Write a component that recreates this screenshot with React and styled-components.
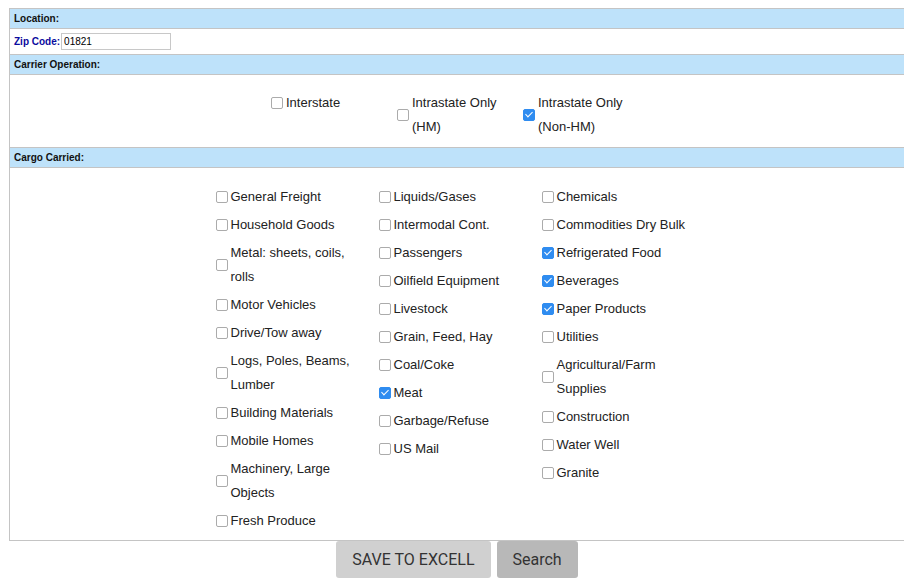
import React from 'react'
import styled, { createGlobalStyle } from 'styled-components'

const carrierOps = [
    { label: 'Interstate', checked: false },
    { label: 'Intrastate Only (HM)', checked: false },
    { label: 'Intrastate Only (Non-HM)', checked: true },
]

const cargoColumns = [
    [
        ['General Freight'], ['Household Goods'], ['Metal: sheets, coils, rolls'],
        ['Motor Vehicles'], ['Drive/Tow away'], ['Logs, Poles, Beams, Lumber'],
        ['Building Materials'], ['Mobile Homes'], ['Machinery, Large Objects'],
        ['Fresh Produce'],
    ],
    [
        ['Liquids/Gases'], ['Intermodal Cont.'], ['Passengers'], ['Oilfield Equipment'],
        ['Livestock'], ['Grain, Feed, Hay'], ['Coal/Coke'], ['Meat', true],
        ['Garbage/Refuse'], ['US Mail'],
    ],
    [
        ['Chemicals'], ['Commodities Dry Bulk'], ['Refrigerated Food', true],
        ['Beverages', true], ['Paper Products', true], ['Utilities'],
        ['Agricultural/Farm Supplies'], ['Construction'], ['Water Well'], ['Granite'],
    ],
]

const CheckItem = ({ label, checked, labelWidth }) => (
    <Item>
        <Check type='checkbox' defaultChecked={checked} />
        <ItemLabel $w={labelWidth}>{label}</ItemLabel>
    </Item>
)

const App = () => {
    return (<>
        <GlobalStyle />
        <Panel>
            <SectionHead>Location:</SectionHead>
            <ZipRow>
                <ZipLabel>Zip Code:</ZipLabel>
                <ZipInput defaultValue='01821' />
            </ZipRow>
            <SectionHead>Carrier Operation:</SectionHead>
            <CarrierBody>
                {carrierOps.map(op => (
                    <CarrierCell key={op.label}>
                        <CheckItem label={op.label} checked={op.checked} labelWidth={100} />
                    </CarrierCell>
                ))}
            </CarrierBody>
            <SectionHead>Cargo Carried:</SectionHead>
            <CargoBody>
                {cargoColumns.map((col, i) => (
                    <CargoColumn key={i}>
                        {col.map(([label, checked]) => (
                            <CheckItem key={label} label={label} checked={checked} labelWidth={135} />
                        ))}
                    </CargoColumn>
                ))}
            </CargoBody>
        </Panel>
        <Buttons>
            <Button>SAVE TO EXCELL</Button>
            <Button $dark>Search</Button>
        </Buttons>
    </>)
}

export default App

const GlobalStyle = createGlobalStyle`
    body {
        margin: 8px;
        background: #fff;
        font-family: "Liberation Sans", Arial, sans-serif;
        color: #222;
    }
`

const Panel = styled.div`
    margin: 0 -1px 0 1px;
    border: 1px solid #c4c4c4;
`

const SectionHead = styled.div`
    height: 19px;
    line-height: 20px;
    padding-left: 4px;
    background: #bee2fa;
    font-size: 10px;
    font-weight: bold;
    color: #111;
    border-bottom: 1px solid #c4c4c4;
`

const ZipRow = styled.div`
    height: 25px;
    display: flex;
    align-items: center;
    padding-left: 4px;
    border-bottom: 1px solid #c4c4c4;
`

const ZipLabel = styled.span`
    font-size: 10px;
    font-weight: bold;
    color: #0b0b9e;
    margin-right: 1px;
`

const ZipInput = styled.input`
    box-sizing: border-box;
    width: 110px;
    height: 17px;
    border: 1px solid #c8c8c8;
    padding: 0 2px;
    font-family: "Liberation Sans", Arial, sans-serif;
    font-size: 10px;
    color: #000;
    outline: none;
`

const CarrierBody = styled.div`
    display: flex;
    justify-content: center;
    align-items: flex-start;
    padding: 14px 2px 6px 0;
    border-bottom: 1px solid #c4c4c4;
`

const CarrierCell = styled.div`
    width: 126px;
`

const CargoBody = styled.div`
    display: flex;
    justify-content: center;
    padding: 15px 2px 5px 0;
`

const CargoColumn = styled.div`
    width: 163px;
    display: flex;
    flex-direction: column;
`

const Item = styled.label`
    display: flex;
    align-items: center;
    padding: 2px 0;
`

const Check = styled.input`
    appearance: none;
    position: relative;
    flex: none;
    width: 12px;
    height: 12px;
    margin: 0 2px 0 4px;
    border: 1px solid #ababab;
    border-radius: 2px;
    background: #fff;
    box-sizing: border-box;

    &:checked {
        background: #2f8cf0;
        border-color: #2f8cf0;
    }

    &:checked::after {
        content: '';
        position: absolute;
        left: 3px;
        top: 0px;
        width: 3px;
        height: 6px;
        border: solid #fff;
        border-width: 0 1.5px 1.5px 0;
        transform: rotate(45deg);
    }
`

const ItemLabel = styled.span`
    max-width: ${p => p.$w}px;
    padding-left: 1px;
    font-size: 13px;
    line-height: 24px;
    color: #222;
`

const Buttons = styled.div`
    display: flex;
    justify-content: center;
    gap: 6px;
    padding-left: 2px;
`

const Button = styled.button`
    height: 37px;
    padding: 0 16px;
    border: none;
    border-radius: 3px;
    background: ${p => p.$dark ? '#b8b8b8' : '#d0d0d0'};
    font-family: Roboto, "Liberation Sans", sans-serif;
    font-size: 16px;
    color: #333;
`
